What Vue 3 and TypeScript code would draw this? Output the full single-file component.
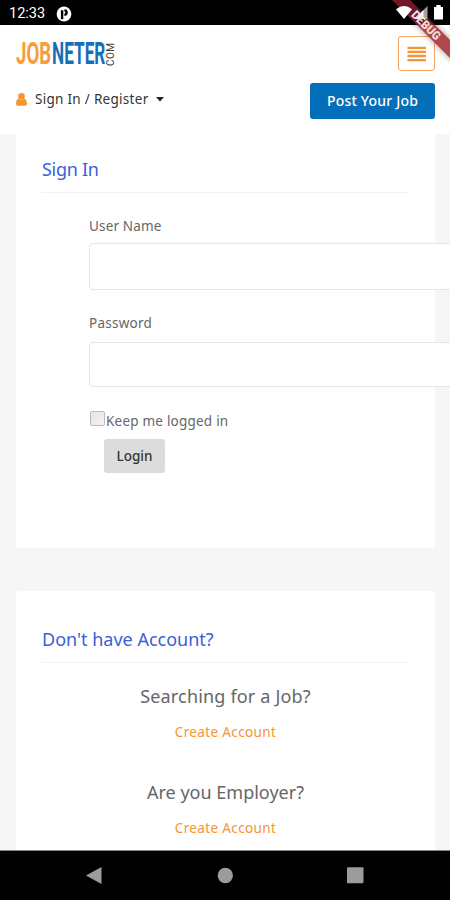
<script setup lang="ts">
import { ref } from 'vue'

interface Prompt {
  question: string
  action: string
}

const prompts: Prompt[] = [
  { question: 'Searching for a Job?', action: 'Create Account' },
  { question: 'Are you Employer?', action: 'Create Account' },
]
const userName = ref<string>('')
const password = ref<string>('')
const keep = ref<boolean>(false)
</script>

<template>
  <div class="screen">
    <div class="status">
      <span class="clock">12:33</span>
      <svg class="app-dot" width="16" height="16" viewBox="0 0 16 16">
        <circle cx="8" cy="8" r="7.4" fill="#fff" />
        <path d="M6.1 13.2V4.2M8.4 4.4a2.2 2.2 0 0 1 0 4.4" fill="none" stroke="#000" stroke-width="2.4" />
      </svg>
    </div>

    <header class="header">
      <div class="bar">
        <svg class="logo" width="102" height="30" viewBox="0 0 102 30">
          <text transform="translate(0 26) scale(.6 1)" class="mark job">JOB</text>
          <text transform="translate(36 26) scale(.555 1)" class="mark neter">NETER</text>
          <text transform="translate(97.5 28) rotate(-90)" class="com">COM</text>
        </svg>
        <button class="menu" aria-label="Menu">
          <svg width="20" height="16" viewBox="0 0 20 16">
            <path d="M.5 1.8H19M.5 5.9H19M.5 10H19M.5 14.1H19" stroke="#f79434" stroke-width="2.3" />
          </svg>
        </button>
      </div>
      <div class="bar second">
        <div class="account">
          <svg width="11" height="13" viewBox="0 0 11 13">
            <circle cx="5.5" cy="3.4" r="3.3" fill="#f79434" />
            <path d="M2.6 5.6Q5.5 8.2 8.4 5.6Q11 6.8 11 11Q11 12.7 9.3 12.7H1.7Q0 12.7 0 11Q0 6.8 2.6 5.6Z" fill="#f79434" />
          </svg>
          <span class="account-text">Sign In / Register</span>
          <svg class="caret" width="8" height="5" viewBox="0 0 8 5"><path d="M0 0H8L4 4.5Z" fill="#222" /></svg>
        </div>
        <button class="post">Post Your Job</button>
      </div>
    </header>

    <main class="content">
      <section class="card login">
        <h2>Sign In</h2>
        <form class="form" @submit.prevent>
          <label for="user">User Name</label>
          <input id="user" v-model="userName" class="field" type="text" />
          <label class="second-label" for="pass">Password</label>
          <input id="pass" v-model="password" class="field shorter" type="password" />
          <label class="keep"><input v-model="keep" class="box" type="checkbox" /><span>Keep me logged in</span></label>
          <button class="submit">Login</button>
        </form>
      </section>

      <section class="card join">
        <h2>Don't have Account?</h2>
        <div v-for="(p, i) in prompts" :key="p.question" class="prompt">
          <p :class="['question', { seek: i === 0 }]">{{ p.question }}</p>
          <a class="create">{{ p.action }}</a>
        </div>
      </section>
    </main>

    <nav class="nav">
      <svg width="18" height="20" viewBox="0 0 18 20"><path d="M0 9.5L15.5 1V18Z" fill="#9c9c9c" /></svg>
      <svg width="18" height="20" viewBox="0 0 18 20"><circle cx="9.3" cy="9.5" r="7.7" fill="#9c9c9c" /></svg>
      <svg width="18" height="20" viewBox="0 0 18 20"><rect x="1" y="1.3" width="16.5" height="16" rx="1" fill="#9c9c9c" /></svg>
    </nav>

    <svg class="ribbon" width="70" height="75" viewBox="0 0 70 75">
      <defs>
        <linearGradient id="band" x1="0" y1="0" x2="0" y2="75" gradientUnits="userSpaceOnUse">
          <stop offset=".333" stop-color="#741827" />
          <stop offset=".333" stop-color="#b2474b" />
        </linearGradient>
        <filter id="soft" x="-30%" y="-30%" width="160%" height="160%"><feGaussianBlur stdDeviation="3" /></filter>
      </defs>
      <path d="M12 0H30L75 45V63Z" fill="#000" opacity=".4" filter="url(#soft)" />
      <path d="M12 0H30L75 45V63Z" fill="url(#band)" />
      <path d="M16 9.2Q24 3 32 9.2L24 19Z" fill="#fff" />
      <path d="M47.5 6V19H34.5Z" fill="#a9a0a2" />
      <path d="M43.5 10V19H34.5Z" fill="#fff" />
      <path d="M54 7h2.3V5h4.4v2H63v12.5h-9Z" fill="#fff" />
      <text transform="translate(46 25.5) rotate(45)" y="4" text-anchor="middle" textLength="36" lengthAdjust="spacingAndGlyphs" class="debug">DEBUG</text>
    </svg>
  </div>
</template>

<style>
body {
  margin: 0;
  overflow: hidden;
}
</style>

<style scoped>
* {
  box-sizing: border-box;
}
.screen {
  position: relative;
  display: flex;
  flex-direction: column;
  width: 450px;
  height: 900px;
  overflow: hidden;
  background: #f6f6f6;
  font-family: 'Noto Sans', sans-serif;
  color: #666;
}
.status {
  display: flex;
  align-items: center;
  flex: none;
  height: 25px;
  padding: 2px 4px 0 9px;
  background: #000;
}
.clock {
  width: 47px;
  font: 400 14.5px/24px Roboto, sans-serif;
  color: #fff;
}
.header {
  flex: none;
  height: 109px;
  padding: 11px 15px 0 16px;
  background: #fff;
}
.bar {
  display: flex;
  align-items: flex-start;
  justify-content: space-between;
}
.logo {
  margin-top: 2px;
  overflow: visible;
}
.mark {
  font: 700 31px Roboto, sans-serif;
}
.job {
  fill: #f79b3b;
}
.neter {
  fill: #176fb8;
}
.com {
  font: 400 10px Roboto, sans-serif;
  letter-spacing: 0.4px;
  fill: #444;
}
.menu {
  display: grid;
  place-items: center;
  width: 37px;
  height: 35px;
  padding: 0;
  border: 1px solid #f4a462;
  border-radius: 3px;
  background: #fff;
}
.second {
  margin-top: 12px;
}
.account {
  display: flex;
  align-items: center;
  height: 32px;
}
.account-text {
  width: 114px;
  margin: 0 7px 0 8px;
  white-space: nowrap;
  font-size: 13.5px;
  letter-spacing: 0.29px;
  color: #333;
}
.post {
  width: 125px;
  height: 36px;
  padding: 0;
  border: 0;
  border-radius: 3px;
  background: #036fba;
  color: #fff;
  font: 500 14px/34px 'Noto Sans', sans-serif;
  letter-spacing: 0.2px;
}
.content {
  display: flex;
  flex-direction: column;
  flex: 1;
  gap: 43px;
  min-height: 0;
  padding: 0 15px 0 16px;
}
.card {
  flex: none;
  padding: 0 26px;
  background: #fff;
}
.login {
  height: 414px;
  padding-top: 21px;
  border-radius: 0 0 4px 4px;
}
.join {
  height: 259px;
  padding-top: 34px;
  border-radius: 4px 4px 0 0;
}
h2 {
  height: 38px;
  margin: 0;
  border-bottom: 1px solid #f2f2f2;
  font-size: 18px;
  font-weight: 400;
  line-height: 28px;
  color: #3b5fd6;
  white-space: nowrap;
}
.login h2 {
  letter-spacing: -0.3px;
}
.form {
  display: flex;
  flex-direction: column;
  align-items: flex-start;
  padding: 23px 0 0 47px;
}
label {
  font-size: 13.5px;
  line-height: 20px;
  white-space: nowrap;
  letter-spacing: 0.15px;
}
.field {
  flex: none;
  width: 400px;
  height: 47px;
  margin-top: 7px;
  border: 1px solid #e6e6e6;
  border-radius: 4px;
  background: #fff;
}
.second-label {
  margin-top: 23px;
  letter-spacing: 0.25px;
}
.shorter {
  height: 45px;
  margin-top: 9px;
}
.keep {
  display: flex;
  align-items: flex-start;
  margin-top: 24px;
  letter-spacing: 0.22px;
}
.box {
  appearance: none;
  width: 15px;
  height: 15px;
  margin: 0 1px;
  border: 1px solid #bbb;
  border-radius: 2px;
  background: linear-gradient(135deg, #e4e4e4, #f3f3f3);
}
.submit {
  width: 61px;
  height: 34px;
  margin: 8px 0 0 15px;
  padding: 0;
  border: 0;
  border-radius: 3px;
  background: #dcdcdc;
  color: #333;
  font: 500 13.5px/34px 'Noto Sans', sans-serif;
}
.prompt {
  height: 96px;
  padding-top: 19px;
  text-align: center;
}
.question {
  margin: 0;
  font-size: 18px;
  line-height: 28px;
}
.seek {
  letter-spacing: 0.17px;
}
.create {
  display: block;
  margin-top: 12px;
  font-size: 13.5px;
  letter-spacing: 0.36px;
  line-height: 20px;
  color: #f79434;
}
.nav {
  display: flex;
  flex: none;
  align-items: center;
  justify-content: space-between;
  height: 50px;
  padding: 0 86px;
  border-top: 1px solid #888;
  background: #000;
}
.ribbon {
  position: absolute;
  top: 0;
  right: 0;
}
.debug {
  font: 900 12px Roboto, sans-serif;
  fill: #f3dede;
}
</style>
